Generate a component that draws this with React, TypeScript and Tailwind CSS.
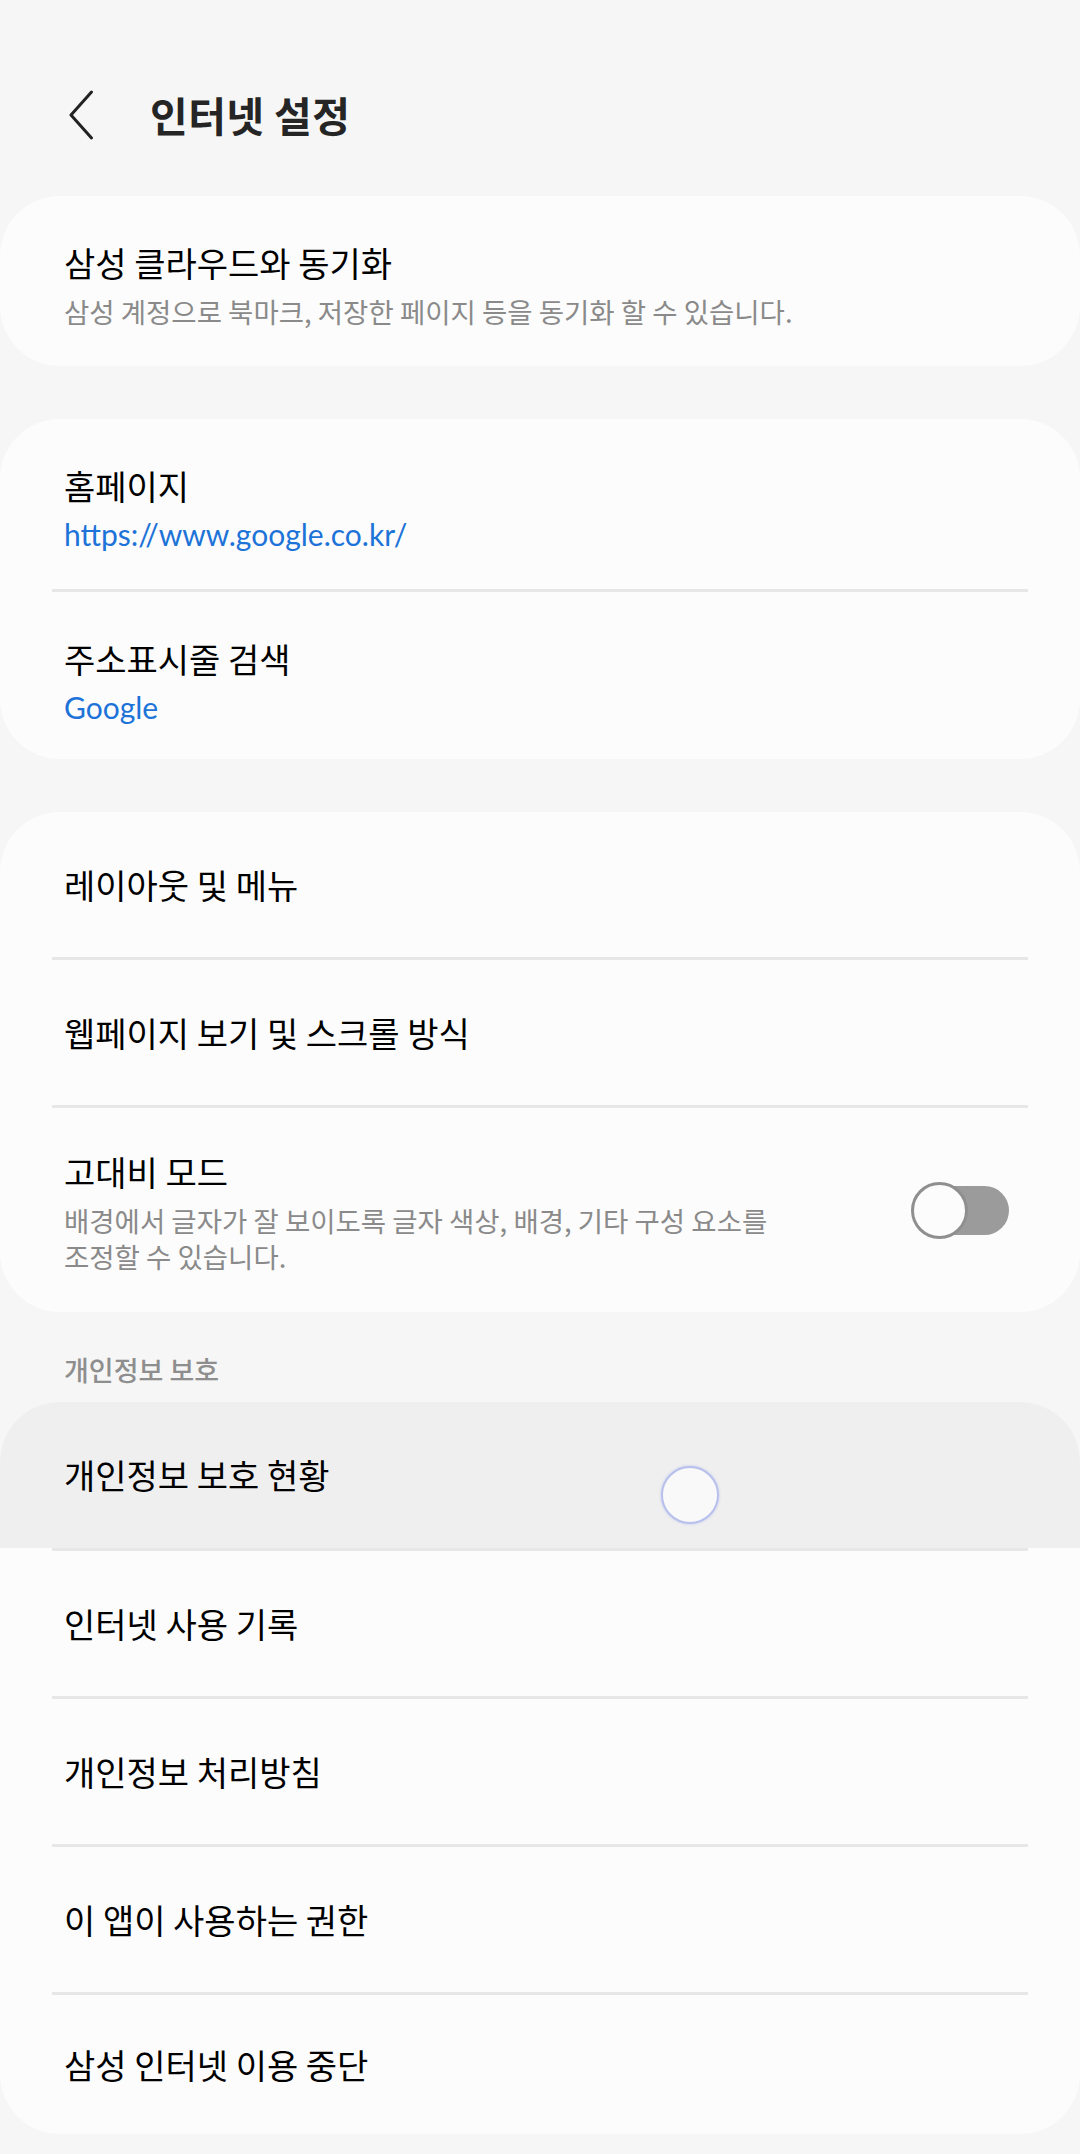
import React from 'react';

const KR = { fontFamily: '"Noto Sans CJK KR", "Noto Sans", sans-serif' };
const LATIN = { fontFamily: 'Lato, "Noto Sans", sans-serif' };

function Divider() {
  return <div className="mx-[52px] h-[3px] bg-[#e7e7e7]" />;
}

function Row({ label, last }: { label: string; last?: boolean }) {
  return (
    <div className={`flex items-center pl-[64px] ${last ? 'h-[139px]' : 'h-[145px]'}`}>
      <span className="text-[34px] leading-[40px] text-black">{label}</span>
    </div>
  );
}

function Toggle() {
  return (
    <div className="relative w-[98px] h-[57px] shrink-0">
      <div className="absolute right-0 top-[4px] h-[49px] w-[84px] rounded-full bg-[#9b9b9b]" />
      <div className="absolute left-0 top-0 h-[57px] w-[57px] rounded-full border-[3px] border-[#8f8f8f] bg-[#fcfcfc]" />
    </div>
  );
}

export default function App() {
  const privacyRows = ['인터넷 사용 기록', '개인정보 처리방침', '이 앱이 사용하는 권한'];

  return (
    <div className="min-h-[2154px] bg-[#f6f6f6] pt-[75px] pb-[21px]" style={KR}>
      {/* header */}
      <div className="flex items-center h-[80px] pl-[68px]">
        <svg width="26" height="50" viewBox="0 0 26 50" className="shrink-0">
          <path d="M23.5 2 L3 25 L23.5 48" fill="none" stroke="#222" strokeWidth="3" strokeLinecap="round" strokeLinejoin="round" />
        </svg>
        <h1 className="ml-[56px] text-[41px] font-bold text-[#252525] tracking-[0.01em]">인터넷 설정</h1>
      </div>

      {/* samsung cloud */}
      <div className="mt-[41px] rounded-[60px] bg-[#fcfcfc] h-[170px]">
        <div className="pl-[64px] pt-[47px]">
          <div className="text-[34px] leading-[40px] text-black">삼성 클라우드와 동기화</div>
          <div className="mt-[10px] text-[27.5px] leading-[36px] text-[#8a8a8a]">
            삼성 계정으로 북마크, 저장한 페이지 등을 동기화 할 수 있습니다.
          </div>
        </div>
      </div>

      {/* homepage / search */}
      <div className="mt-[53px] rounded-[60px] bg-[#fcfcfc]">
        <div className="h-[170px]">
          <div className="pl-[64px] pt-[47px]">
            <div className="text-[34px] leading-[40px] text-black">홈페이지</div>
            <div className="mt-[10px] text-[30px] leading-[36px] text-[#1d73d8]" style={LATIN}>
              https://www.google.co.kr/
            </div>
          </div>
        </div>
        <Divider />
        <div className="h-[167px]">
          <div className="pl-[64px] pt-[47px]">
            <div className="text-[34px] leading-[40px] text-black">주소표시줄 검색</div>
            <div className="mt-[10px] text-[30px] leading-[36px] text-[#1d73d8]" style={LATIN}>
              Google
            </div>
          </div>
        </div>
      </div>

      {/* layout / view / contrast */}
      <div className="mt-[53px] rounded-[60px] bg-[#fcfcfc] overflow-hidden">
        <Row label="레이아웃 및 메뉴" />
        <Divider />
        <Row label="웹페이지 보기 및 스크롤 방식" />
        <Divider />
        <div className="flex items-center pl-[64px] pr-[71px] h-[204px]">
          <div className="flex-1 pt-[6px]">
            <div className="text-[34px] leading-[40px] text-black">고대비 모드</div>
            <div className="mt-[10px] max-w-[730px] text-[27.5px] leading-[36px] text-[#8a8a8a]">
              배경에서 글자가 잘 보이도록 글자 색상, 배경, 기타 구성 요소를 조정할 수 있습니다.
            </div>
          </div>
          <Toggle />
        </div>
      </div>

      {/* privacy */}
      <div className="mt-[42px] mb-[16px] pl-[64px] text-[27px] leading-[32px] font-medium text-[#8e8e8e]">개인정보 보호</div>
      <div className="rounded-[60px] bg-[#fcfcfc] overflow-hidden">
        <div className="relative flex items-center pl-[64px] h-[146px] bg-[#efefef]">
          <span className="text-[34px] leading-[40px] text-black">개인정보 보호 현황</span>
          <div className="absolute left-[661px] top-[64px] h-[58px] w-[58px] rounded-full border-2 border-[#b8c0ec] bg-[#f9f9f9] shadow-[0_0_3px_#c2c8ee]" />
        </div>
        <Divider />
        {privacyRows.map((label) => (
          <React.Fragment key={label}>
            <Row label={label} />
            <Divider />
          </React.Fragment>
        ))}
        <Row label="삼성 인터넷 이용 중단" last />
      </div>
    </div>
  );
}
